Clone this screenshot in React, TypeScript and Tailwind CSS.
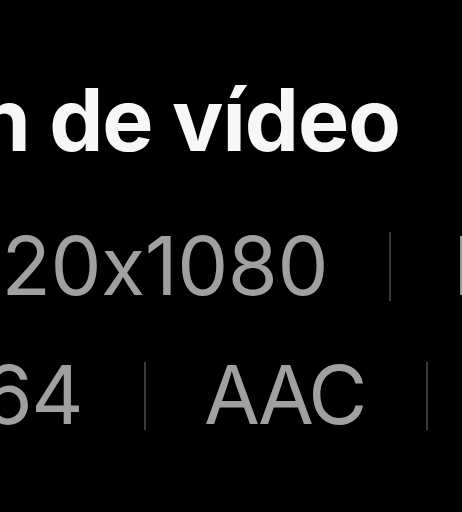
export default function App() {
  const font = { fontFamily: "Inter, 'Noto Sans', sans-serif" };

  return (
    <div
      className="w-[462px] h-[512px] overflow-hidden bg-black [font-feature-settings:'calt'_0]"
      style={font}
    >
      {/* Title, cropped on the left */}
      <div className="pt-[77px] flex w-[400px] justify-end">
        <h1 className="shrink-0 whitespace-nowrap text-[86px] leading-none font-bold text-[#f7f7f7] tracking-[-1px]">
          Información de vídeo
        </h1>
      </div>

      {/* Resolution row */}
      <div className="mt-[63px] flex items-center whitespace-nowrap text-[81px] leading-none text-[#a0a0a0]">
        <div className="flex w-[328px] shrink-0 justify-end">
          <span className="shrink-0 tracking-[-0.5px]">1920x1080</span>
        </div>
        <div className="ml-[61px] mr-[62px] h-[69px] w-[2px] shrink-0 bg-[#3a3a3a]" />
        <span className="shrink-0">FPS</span>
      </div>

      {/* Codec row */}
      <div className="mt-[48px] flex items-center whitespace-nowrap text-[81px] leading-none text-[#a0a0a0]">
        <div className="flex w-[82px] shrink-0 justify-end">
          <span className="shrink-0 tracking-[-1.5px]">H.264</span>
        </div>
        <div className="ml-[62px] mr-[58px] h-[68px] w-[2px] shrink-0 bg-[#3a3a3a]" />
        <span className="shrink-0 tracking-[-3px]">AAC</span>
        <div className="ml-[62px] h-[68px] w-[2px] shrink-0 bg-[#3a3a3a]" />
      </div>
    </div>
  );
}
